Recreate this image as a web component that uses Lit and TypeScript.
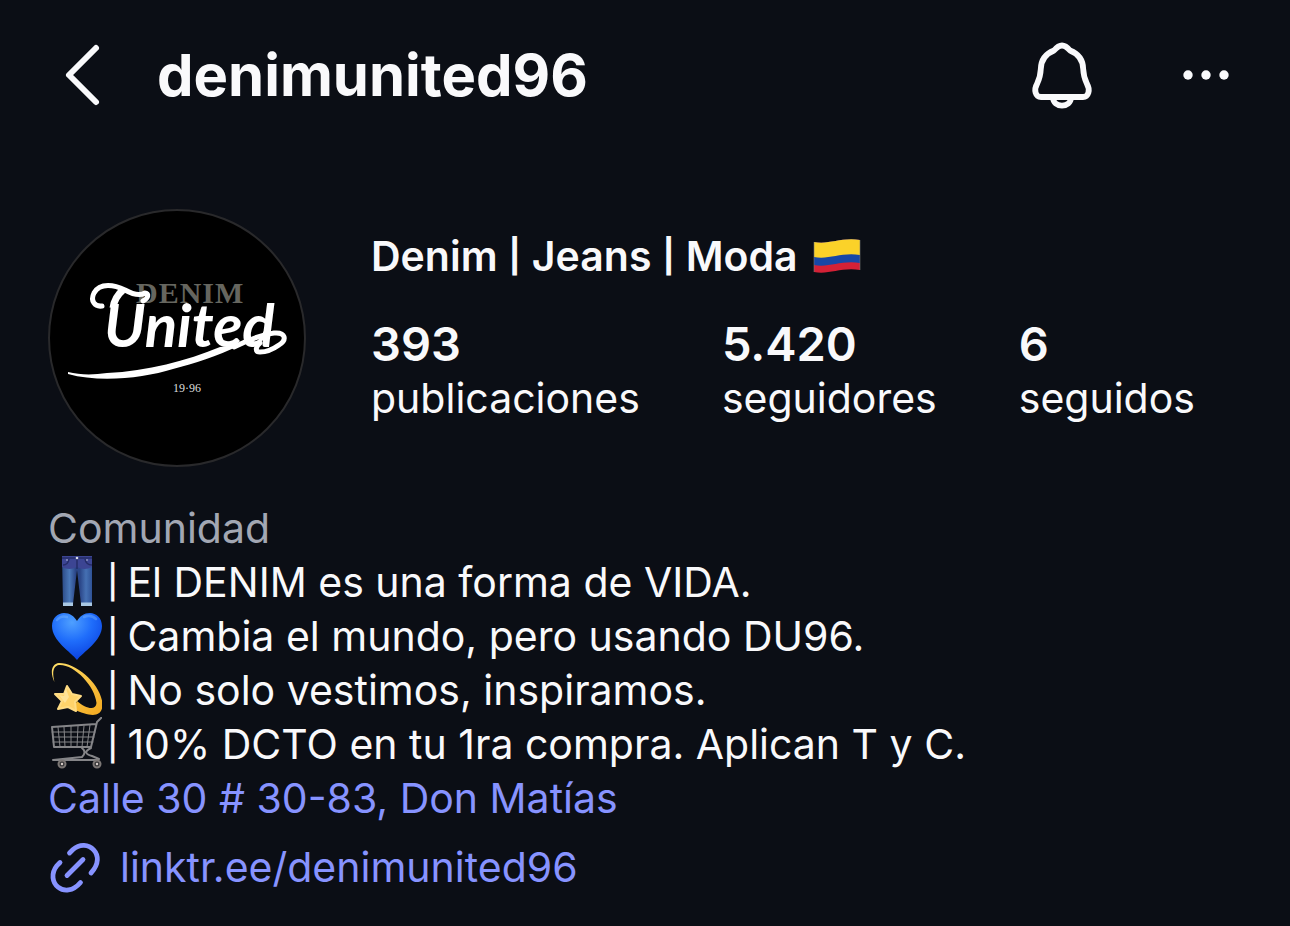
import { LitElement, html, css, svg } from "lit";
import { customElement } from "lit/decorators.js";

const jeans = svg`
  <svg class="emoji" viewBox="0 0 54 54" role="img" aria-label="Jeans">
    <defs>
      <linearGradient id="denim" x1="0" x2="1"><stop offset="0" stop-color="#2b4a86"/><stop offset=".25" stop-color="#4a78b8"/><stop offset=".45" stop-color="#2b4688"/><stop offset=".6" stop-color="#2b4688"/><stop offset=".8" stop-color="#4570b3"/><stop offset="1" stop-color="#2f5296"/></linearGradient>
    </defs>
    <path d="M14 1H44L44 49H33L29 15L25 49H15Z" fill="url(#denim)"/>
    <path d="M14 1H44V12Q36 16 29 12Q21 16 14 12Z" fill="#3c4593"/>
    <path d="M14 3H44M29 3V14M15 10Q20 10 21 4M44 10Q38 10 37 4" fill="none" stroke="#252d68" stroke-width="1.500"/>
    <circle cx="29" cy="3" r="1.300" fill="#d9dcec"/><circle cx="19" cy="5" r=".8" fill="#c5cbe0"/><circle cx="39" cy="5" r=".8" fill="#c5cbe0"/>
    <path d="M15 47.500H25V51H15ZM33 47.500H44V51H33Z" fill="#a9c8e4"/>
  </svg>`;

const heart = svg`
  <svg class="emoji" viewBox="0 0 54 54" role="img" aria-label="Corazón azul">
    <defs><radialGradient id="blue" cx=".4" cy=".2" r=".8"><stop offset="0" stop-color="#4fa0ff"/><stop offset=".5" stop-color="#1f6dfb"/><stop offset="1" stop-color="#0b42e0"/></radialGradient></defs>
    <path d="M29 51C23 43 4 32 4 17C4 9 10 4 16 4C22 4 26 7 29 12C32 7 36 4 42 4C48 4 54 9 54 17C54 32 35 43 29 51Z" fill="url(#blue)"/>
    <path d="M9 11Q13 6 19 8M36 8Q43 5 48 10" fill="none" stroke="#7dbaff" stroke-width="2.500" stroke-linecap="round" opacity=".4"/>
  </svg>`;

const dizzy = svg`
  <svg class="emoji" viewBox="0 0 54 54" role="img" aria-label="Estrella fugaz">
    <defs><linearGradient id="gold" x1="0" y1="0" x2="1" y2="1"><stop offset="0" stop-color="#ffe06a"/><stop offset="1" stop-color="#f3a91f"/></linearGradient></defs>
    <path d="M6.500 19C2 10 3 1 11 0C29 0 54 22 54.500 42C54 55 42 54 25 46L29 38C38 46 48 48 48.500 40C47 23 26 1 11 2C5 3 4 10 6.500 19Z" fill="url(#gold)"/>
    <path d="M19 23L24 31L33 33L27 39L28 48L20 44L10 46L14 38L7 31L16 31Z" fill="#ffd36a" stroke="#ffdc84" stroke-width="2" stroke-linejoin="round"/>
    <path d="M18 26L21 34L17 40L11 32L16 33Z" fill="#fff3c4" opacity=".5"/>
  </svg>`;

const cart = svg`
  <svg class="emoji" viewBox="0 0 54 54" role="img" aria-label="Carrito">
    <g fill="none" stroke="#858588" stroke-width="1.500" stroke-linecap="round" stroke-linejoin="round">
      <path d="M54 0L49 5L43 30H6L4 10L48 7" stroke-width="2"/>
      <path d="M4 15H47M5 20H46M5 25H45M10 10L12 30M16 10L17 30M23 9L23 30M30 9L29 30M36 9L34 30M42 8L39 30" stroke-width="1"/>
      <path d="M34 31Q39 35 34 40L5 43M43 31Q33 36 44 39L51 42M6 43H50" stroke-width="2"/>
    </g>
    <g fill="#39383a" stroke="#7c7775" stroke-width="2"><circle cx="14" cy="47" r="3.500"/><circle cx="49" cy="47" r="3.500"/></g>
    <circle cx="14" cy="47" r="1.200" fill="#d8cdc8"/><circle cx="49" cy="47" r="1.200" fill="#d8cdc8"/>
  </svg>`;

const flag = svg`
  <svg class="flag" viewBox="0 0 48 34" role="img" aria-label="Colombia">
    <path d="M1 3C16 6 28 -2 47 1V31C28 28 16 36 1 33Z" fill="#d42136"/>
    <path d="M1 3C16 6 28 -2 47 1V24C28 21 16 29 1 26Z" fill="#1747a6"/>
    <path d="M1 3C16 6 28 -2 47 1V16C28 13 16 21 1 18Z" fill="#fbd229"/>
    <path d="M1 3V33M47 1V31" stroke="#777" stroke-width="1" opacity=".6"/>
  </svg>`;

const stats = [
  { value: "393", label: "publicaciones" },
  { value: "5.420", label: "seguidores" },
  { value: "6", label: "seguidos" },
];

const bio = [
  { icon: jeans, text: "El DENIM es una forma de VIDA." },
  { icon: heart, text: "Cambia el mundo, pero usando DU96." },
  { icon: dizzy, text: "No solo vestimos, inspiramos." },
  { icon: cart, text: "10% DCTO en tu 1ra compra. Aplican T y C." },
];

@customElement("app-root")
export class AppRoot extends LitElement {
  static styles = css`
    :host {
      display: block;
      min-height: 100vh;
      box-sizing: border-box;
      padding: 32px 48px;
      background: #0b0e15;
      color: #f9f9fb;
      font: 400 41px/54px Inter, "Liberation Sans", sans-serif;
    }
    svg { display: block; flex: none; }
    header { display: flex; align-items: center; height: 86px; }
    button {
      display: flex;
      padding: 0;
      border: 0;
      background: none;
      color: inherit;
      cursor: pointer;
    }
    h1, h2, p, dl, dd { margin: 0; }
    h1 { flex: 1; margin-left: 45px; font-size: 58px; line-height: 72px; font-weight: 700; }
    .back { width: 64px; height: 72px; }
    .bell { width: 68px; height: 72px; }
    .more { width: 56px; height: 72px; margin: 0 8px 0 82px; }
    .profile { display: flex; align-items: center; gap: 65px; margin-top: 91px; }
    .details { padding-bottom: 22px; }
    .avatar { width: 258px; height: 258px; }
    .denim { font: 700 30px "Liberation Serif", serif; letter-spacing: 1px; fill: #66665f; }
    .united { font: italic 700 60px Lato, sans-serif; fill: #fff; }
    .year { font: 400 12px "Liberation Serif", serif; fill: #ddd; }
    h2 { display: flex; align-items: center; gap: 11px; font-size: 41px; line-height: 54px; font-weight: 600; }
    .flag { width: 48px; height: 34px; margin-left: 4px; }
    .bar { font-size: 33px; font-weight: 500; }
    h2 .bar { font-weight: 700; }
    .stats { display: flex; gap: 82px; margin-top: 34px; }
    .stat { display: flex; flex-direction: column-reverse; }
    .value { font-size: 47px; font-weight: 600; }
    .bio { margin-top: 34px; }
    .category { color: #a2a7b3; }
    .line { display: flex; gap: 5px; }
    .line .text { margin-left: 4px; }
    .emoji { width: 54px; height: 54px; }
    a { color: #8793ff; text-decoration: none; }
    .site { display: inline-flex; align-items: center; gap: 18px; margin-top: 15px; }
    .link { width: 54px; height: 54px; }
  `;

  render() {
    return html`
      <header>
        <button aria-label="Atrás">
          <svg class="back" viewBox="0 0 64 72" fill="none" stroke="currentColor" stroke-width="6" stroke-linecap="round" stroke-linejoin="round">
            <path d="M48 9L21 36L48 63"/>
          </svg>
        </button>
        <h1>denimunited96</h1>
        <button aria-label="Notificaciones">
          <svg class="bell" viewBox="0 0 68 72" fill="none" stroke="currentColor" stroke-width="5.800" stroke-linejoin="round">
            <path d="M34 6.500C30.500 6.500 28.500 8.500 26 11.500C17 15 13 22 12.800 30C12.500 37 12 39 9 45C5.500 51 7.500 58 13 58H55C60.500 58 62.500 51 59 45C56 39 55.500 37 55.200 30C55 22 51 15 42 11.500C39.500 8.500 37.500 6.500 34 6.500Z"/>
            <path d="M25 58C25 69.500 43 69.500 43 58"/>
          </svg>
        </button>
        <button aria-label="Más opciones">
          <svg class="more" viewBox="0 0 56 72" fill="currentColor">
            <circle cx="10" cy="36" r="4.700"/><circle cx="28" cy="36" r="4.700"/><circle cx="46" cy="36" r="4.700"/>
          </svg>
        </button>
      </header>
      <main>
        <section class="profile">
          <svg class="avatar" viewBox="0 0 258 258" role="img" aria-label="Denim United 1996">
            <circle cx="129" cy="129" r="128" fill="#000" stroke="#29292b" stroke-width="2"/>
            <text class="denim" x="88" y="94">DENIM</text>
            <text class="united" x="56" y="138">United</text>
            <path d="M54 97C47 98 42 92 46 84C52 73 67 76 77 81C86 86 92 87 97 84C101 84 101 89 95 92" fill="none" stroke="#fff" stroke-width="5" stroke-linecap="round"/>
            <path d="M75 81C69 86 66 92 65 99" fill="none" stroke="#fff" stroke-width="7"/>
            <path d="M20 163C32 166 45 166 59 164C100 162 138 152 172 138L192 136C168 148 147 154 125 160C96 169 52 174 20 165Z" fill="#fff"/>
            <path d="M186 138C198 132 212 126 226 124C238 123 239 131 231 136C224 141 217 143 212 143C207 143 207 138 212 134" fill="none" stroke="#fff" stroke-width="5" stroke-linecap="round"/>
            <text class="year" x="125" y="183">19·96</text>
          </svg>
          <div class="details">
            <h2>Denim <span class="bar">|</span> Jeans <span class="bar">|</span> Moda ${flag}</h2>
            <dl class="stats">
              ${stats.map((s) => html`<div class="stat"><dt>${s.label}</dt><dd class="value">${s.value}</dd></div>`)}
            </dl>
          </div>
        </section>
        <section class="bio">
          <p class="category">Comunidad</p>
          ${bio.map((b) => html`<p class="line">${b.icon}<span class="bar">|</span><span class="text">${b.text}</span></p>`)}
          <p><a href="#direccion">Calle 30 # 30-83, Don Matías</a></p>
          <a class="site" href="#linktree">
            <svg class="link" viewBox="0 0 54 54" fill="none" stroke="currentColor" stroke-width="4.800" stroke-linecap="round">
              <path d="M21.500 13L25 9.500C39 -3 60 15 43 33M12 22.500L9 25.500C-4 42 17 61 32.500 42.500M19 35.500L35 19.500"/>
            </svg>
            linktr.ee/denimunited96
          </a>
        </section>
      </main>
    `;
  }
}
